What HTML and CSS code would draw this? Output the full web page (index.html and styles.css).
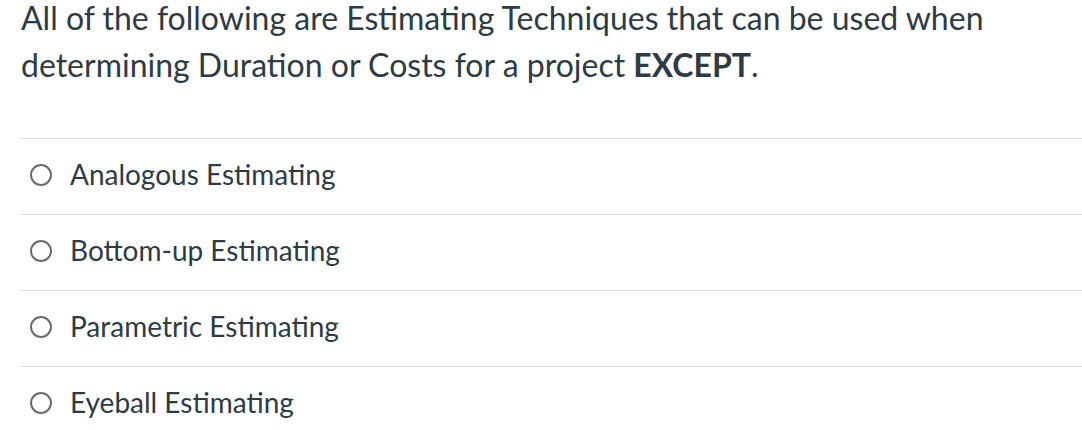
FILE: index.html
```html
<!DOCTYPE html>
<html>
<head>
<meta charset="utf-8">
<link rel="stylesheet" href="styles.css">
</head>
<body>
<div class="question">
  <p class="question-text">All of the following are Estimating Techniques that can be used when determining Duration or Costs for a project <strong>EXCEPT</strong>.</p>
  <ul class="answers">
    <li class="answer"><span class="radio"></span><span class="label">Analogous Estimating</span></li>
    <li class="answer"><span class="radio"></span><span class="label">Bottom-up Estimating</span></li>
    <li class="answer"><span class="radio"></span><span class="label">Parametric Estimating</span></li>
    <li class="answer"><span class="radio"></span><span class="label">Eyeball Estimating</span></li>
  </ul>
</div>
</body>
</html>
```

FILE: styles.css
```css
html, body {
  margin: 0;
  padding: 0;
  background: #ffffff;
}
body {
  font-family: Lato, "Liberation Sans", sans-serif;
  color: #2d3b45;
  overflow: hidden;
}
.question {
  padding-left: 20px;
}
.question-text {
  margin: -6px 0 0 0;
  padding-left: 1px;
  font-size: 32px;
  line-height: 47px;
}
.question-text strong {
  font-weight: 700;
}
.answers {
  list-style: none;
  margin: 50px 0 0 0;
  padding: 0;
}
.answer {
  display: flex;
  align-items: center;
  box-sizing: border-box;
  border-top: 1px solid #dddddd;
  height: 76px;
  padding: 0 0 6px 10px;
}
.radio {
  width: 18px;
  height: 18px;
  border: 2px solid #6b6b6b;
  border-radius: 50%;
  margin: 2px 18px 0 0;
  flex: none;
}
.label {
  font-size: 28px;
}
```
